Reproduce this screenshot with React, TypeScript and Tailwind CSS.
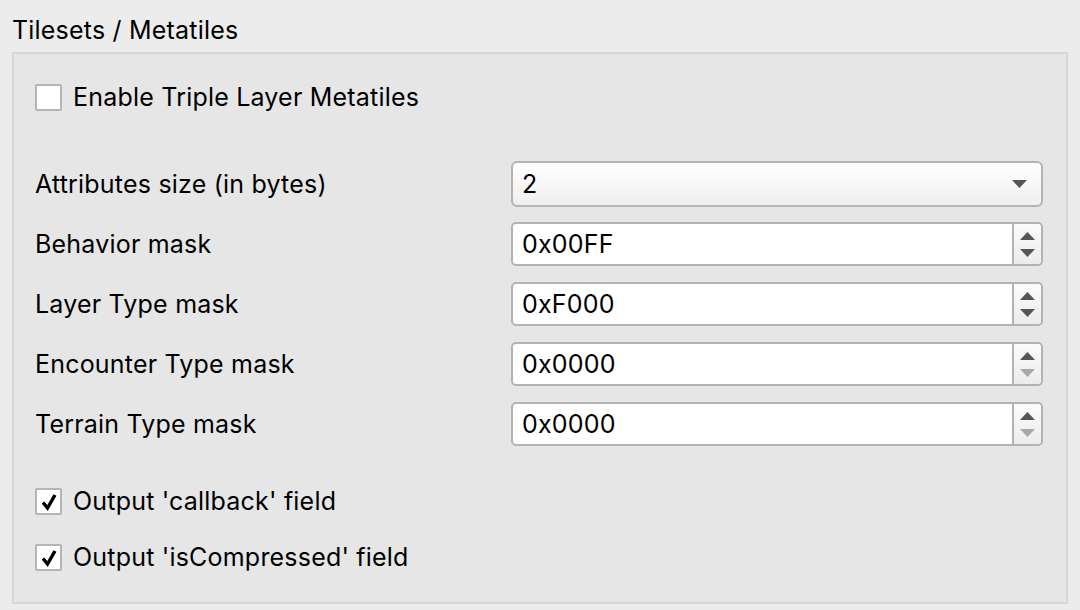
import React from "react";

function Check({ checked }: { checked: boolean }) {
  return (
    <div className="w-[27px] h-[27px] border-2 border-[#b5b5b5] bg-white rounded-[2px] flex items-center justify-center shrink-0">
      {checked && (
        <svg width="18" height="18" viewBox="0 0 18 18">
          <path d="M3 9.5 L7.5 15 L15 2" fill="none" stroke="#000" strokeWidth="3.4" strokeLinejoin="miter" />
        </svg>
      )}
    </div>
  );
}

function CheckRow({ checked, label, className }: { checked: boolean; label: string; className?: string }) {
  return (
    <div className={"flex items-center gap-[11px] h-[27px] " + (className ?? "")}>
      <Check checked={checked} />
      <span>{label}</span>
    </div>
  );
}

function Spin({ value, downDisabled }: { value: string; downDisabled?: boolean }) {
  return (
    <div className="w-[532px] h-[44px] border-2 border-[#b3b3b3] rounded-[5px] bg-white flex items-stretch">
      <div className="flex-1 flex items-center pl-[9px]">{value}</div>
      <div className="w-[29px] border-l-2 border-[#b3b3b3] bg-gradient-to-b from-[#fbfbfb] to-[#ececec] rounded-r-[4px] flex flex-col items-center justify-center gap-[9px]">
        <svg width="15" height="8" viewBox="0 0 15 8">
          <path d="M0 8 L7.5 0 L15 8 Z" fill="#555" />
        </svg>
        <svg width="15" height="8" viewBox="0 0 15 8">
          <path d="M0 0 L7.5 8 L15 0 Z" fill={downDisabled ? "#a8a8a8" : "#555"} />
        </svg>
      </div>
    </div>
  );
}

function Row({ label, children, className }: { label: string; children: React.ReactNode; className?: string }) {
  return (
    <div className={"flex items-center justify-between " + (className ?? "")}>
      <span>{label}</span>
      {children}
    </div>
  );
}

export default function App() {
  return (
    <div
      className="w-[1080px] h-[610px] bg-[#ececec] text-[25px] tracking-[0.2px] leading-none text-black overflow-hidden"
      style={{ fontFamily: 'Inter, "Liberation Sans", Arial, sans-serif' }}
    >
      <div className="pl-[12px] pt-[15px] h-[45px] leading-[30px]">Tilesets / Metatiles</div>
      <div className="ml-[12px] mt-[7px] w-[1056px] h-[552px] border-2 border-[#d6d6d6] bg-[#e6e6e6] pl-[21px] pr-[23px] flex flex-col">
        <CheckRow checked={false} label="Enable Triple Layer Metatiles" className="mt-[30px]" />
        <Row label="Attributes size (in bytes)" className="mt-[50px]">
          <div className="w-[532px] h-[46px] border-2 border-[#b3b3b3] rounded-[6px] bg-gradient-to-b from-[#ffffff] to-[#efefef] flex items-center justify-between pl-[9px] pr-[14px]">
            <span>2</span>
            <svg width="15" height="8" viewBox="0 0 15 8">
              <path d="M0 0 L7.5 8 L15 0 Z" fill="#555" />
            </svg>
          </div>
        </Row>
        <Row label="Behavior mask" className="mt-[15px]">
          <Spin value="0x00FF" />
        </Row>
        <Row label="Layer Type mask" className="mt-[16px]">
          <Spin value="0xF000" />
        </Row>
        <Row label="Encounter Type mask" className="mt-[16px]">
          <Spin value="0x0000" downDisabled />
        </Row>
        <Row label="Terrain Type mask" className="mt-[16px]">
          <Spin value="0x0000" downDisabled />
        </Row>
        <CheckRow checked label="Output 'callback' field" className="mt-[42px]" />
        <CheckRow checked label="Output 'isCompressed' field" className="mt-[29px]" />
      </div>
    </div>
  );
}
